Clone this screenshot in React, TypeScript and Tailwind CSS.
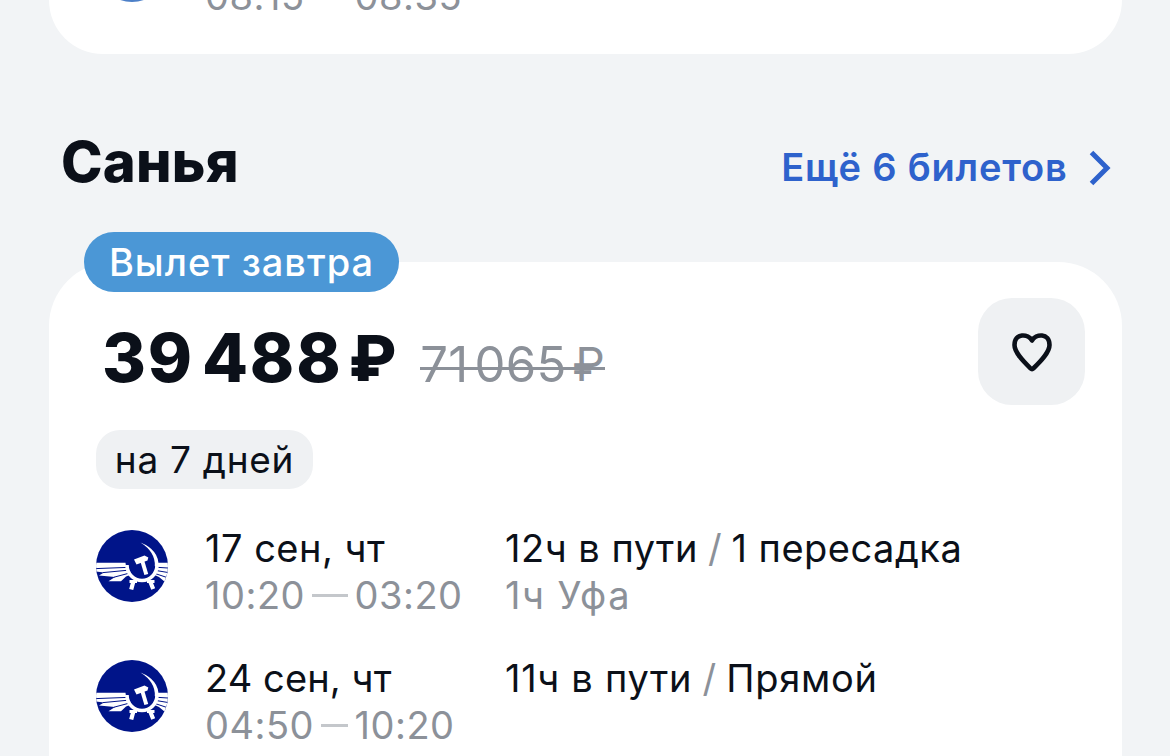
import React from "react";

function Logo() {
  return (
    <svg viewBox="0 0 72 72" className="block size-[72px] shrink-0">
      <defs>
        <clipPath id="disc">
          <circle cx="36" cy="36" r="36" />
        </clipPath>
      </defs>
      <g clipPath="url(#disc)">
        <rect width="72" height="72" fill="#001489" />
        <path d="M0 32.800H29.500Q30 40 34 45L30 46.500L25 51.300H12.500L19 47L3 45.500L8 42.500L0 41.500Z" fill="#fff" />
        <path d="M72 32.800H61.500Q61 39 57.500 44.500L63 47L69 52L72 46Z" fill="#fff" />
        <path d="M0 38.600L31 37.400M7 42.600L31 40.300M18 47.200L33 43.200M61 37.300L72 38M60 40.500L72 42.500M59 43.500L71 47.500" stroke="#001489" strokeWidth="1" />
        <circle cx="46" cy="36.500" r="13.200" fill="#001489" />
        <path d="M31 35A15 15.500 0 0 0 61 35" fill="none" stroke="#fff" strokeWidth="3.600" />
        <path d="M33.500 51.500H41M51 51.500H58.500" stroke="#fff" strokeWidth="3" />
        <path d="M37.500 51L35.200 59.500M54 51L57.200 59" stroke="#fff" strokeWidth="4.200" />
        <path d="M44.500 12.500Q63 20 62.500 36L58.800 36Q59.500 22 44.500 12.500Z" fill="#fff" />
        <path d="M38 29.500L48.500 25.500L52.300 27.500L51.500 30.500L40.500 34.500Z" fill="#fff" />
        <path d="M46 30L50.300 44.500" stroke="#fff" strokeWidth="4" />
      </g>
    </svg>
  );
}

type LegProps = {
  date: React.ReactNode;
  from: string;
  to: string;
  via?: React.ReactNode;
  children: React.ReactNode;
};

function Times({ from, to }: { from: string; to: string }) {
  return (
    <div className="flex h-[47px] items-center leading-[47px] tracking-[0.5px] text-[#8c9199]">
      <div className="flex w-[143px] items-center gap-[7px]">
        <span>{from}</span>
        <span className="h-[3px] grow bg-[#c4c7cb]" />
      </div>
      <span className="ml-[6.500px]">{to}</span>
    </div>
  );
}

function Leg({ date, from, to, via, children }: LegProps) {
  return (
    <div className="flex h-[130px] items-start">
      <Logo />
      <div className="-mt-[5px] ml-[37px] w-[300px] shrink-0">
        <div className="h-[47px] leading-[47px]">{date}</div>
        <Times from={from} to={to} />
      </div>
      <div className="-mt-[5px] whitespace-nowrap tracking-[0.5px]">
        <div className="h-[47px] leading-[47px]">{children}</div>
        <div className="h-[47px] leading-[47px] text-[#8c9199]">{via}</div>
      </div>
    </div>
  );
}

function Slash() {
  return <span className="-ml-[1px] -mr-[2px] text-[#8c9199]">/</span>;
}

export default function App() {
  return (
    <div className="h-[756px] w-[1170px] overflow-hidden bg-[#f2f4f6] px-[48.500px] font-['Inter',sans-serif] text-[38px] text-[#0b1019]">
      <section className="flex h-[54px] items-end overflow-hidden rounded-b-[64px] bg-white pl-[47.500px]">
        <div className="mb-[52px] size-[72px] shrink-0 rounded-full bg-[#4d80c8]" />
        <div className="mb-[34px] ml-[37px]">
          <Times from="08:15" to="08:35" />
        </div>
      </section>

      <header className="flex h-[208px] items-start justify-between pl-[12.500px] pr-[11px] pt-[73px]">
        <h1 className="h-[70px] text-[56px] font-extrabold leading-[70px] tracking-[0.2px]">Санья</h1>
        <a className="mt-[16px] flex h-[48px] items-center gap-[21px] font-semibold leading-[48px] tracking-[0.8px] text-[#2e62cc]">
          <span>Ещё 6 билетов</span>
          <svg viewBox="0 0 22 36" className="mt-[2px] block h-[36px] w-[22px]" fill="none" stroke="currentColor" strokeWidth="5">
            <path d="M2.500 2.500L18 18L2.500 33.500" />
          </svg>
        </a>
      </header>

      <section className="relative h-[560px] rounded-t-[64px] bg-white pl-[47.500px] pr-[36.500px] pt-[36px]">
        <div className="absolute -top-[30px] left-[35.500px] flex h-[60px] w-[315px] items-center justify-center rounded-full bg-[#4b97d6] font-medium tracking-[1px] text-white">
          Вылет завтра
        </div>
        <div className="flex h-[107px] items-start justify-between">
          <div className="flex items-baseline pl-[6px] pt-[18px] leading-[84px]">
            <span className="flex items-baseline text-[67px] font-extrabold tracking-[1.800px]">
              <span>39</span>
              <span className="ml-[8px]">488</span>
              <span className="relative -top-[1px] ml-[6px] text-[63px] tracking-normal">₽</span>
            </span>
            <span className="relative ml-[24px] flex items-baseline text-[49px] tracking-[0.3px] text-[#8c9199]">
              <span>71</span>
              <span className="ml-[6px]">065</span>
              <span className="relative -top-[1px] ml-[6px] text-[46px] tracking-normal">₽</span>
              <span className="absolute left-0 right-0 top-[44px] h-[3px] bg-[#8c9199]" />
            </span>
          </div>
          <button className="flex size-[107px] items-center justify-center rounded-[34px] bg-[#eff1f3]">
            <svg viewBox="0 0 42 42" className="block size-[42px]" fill="none" stroke="#0b1019" strokeWidth="4.600" strokeLinecap="round" strokeLinejoin="round">
              <path d="M21 9.500C17.500 2.800 3.500 1.500 3.500 14C3.500 21.500 12.500 30.500 19.500 37.300Q21 38.700 22.500 37.300C29.500 30.500 38.500 21.500 38.500 14C38.500 1.500 24.500 2.800 21 9.500Z" />
            </svg>
          </button>
        </div>
        <div className="mt-[25px] flex h-[59px] w-[217px] items-center justify-center rounded-[24px] bg-[#eff1f3] text-[37px] tracking-[0.700px]">
          на 7 дней
        </div>
        <div className="mt-[41px]">
          <Leg date={<span className="tracking-[0.5px]">17 сен, чт</span>} from="10:20" to="03:20" via={<span className="tracking-[1.500px]">1ч Уфа</span>}>
            12ч в пути <Slash /> 1 пересадка
          </Leg>
          <Leg date={<span className="tracking-[0.1px]">24 сен, чт</span>} from="04:50" to="10:20">
            <span className="tracking-[0.700px]">11ч в пути <Slash /> Прямой</span>
          </Leg>
        </div>
      </section>
    </div>
  );
}
